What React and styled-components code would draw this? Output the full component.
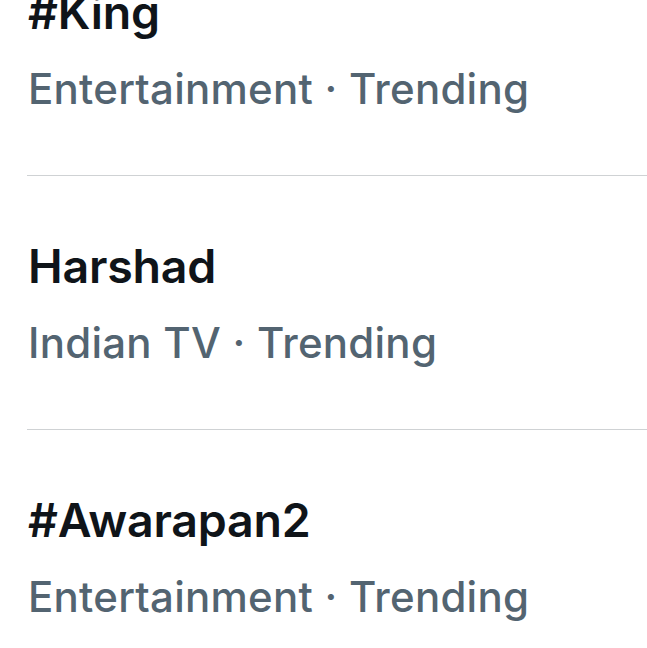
import React from 'react'
import styled, { createGlobalStyle } from 'styled-components'

const trends = [
  { title: '#King', category: 'Entertainment' },
  { title: 'Harshad', category: 'Indian TV' },
  { title: '#Awarapan2', category: 'Entertainment' },
]

const GlobalStyle = createGlobalStyle`
  html, body {
    margin: 0;
    padding: 0;
    background: #ffffff;
  }
  body {
    font-family: Inter, "Noto Sans", "Liberation Sans", sans-serif;
    -webkit-font-smoothing: antialiased;
  }
`

const Page = styled.div`
  width: 647px;
  height: 648px;
  overflow: hidden;
  background: #ffffff;
`

const List = styled.ul`
  list-style: none;
  margin: -78px 0 0 0;
  padding: 0;
`

const Row = styled.li`
  margin-left: 27px;
  padding: 66px 0 65px 1px;
  border-bottom: 1px solid #cfd2d4;
`

const Title = styled.div`
  font-size: 46.5px;
  line-height: 48px;
  font-weight: 600;
  letter-spacing: -0.2px;
  color: #0f1419;
`

const Meta = styled.div`
  margin-top: 32px;
  font-size: 42px;
  line-height: 42px;
  font-weight: 500;
  letter-spacing: 0.25px;
  color: #536471;
`

function App() {
  return (
    <Page>
      <GlobalStyle />
      <List>
        {trends.map((t, i) => (
          <Row key={i}>
            <Title>{t.title}</Title>
            <Meta>{t.category} · Trending</Meta>
          </Row>
        ))}
      </List>
    </Page>
  )
}

export default App
